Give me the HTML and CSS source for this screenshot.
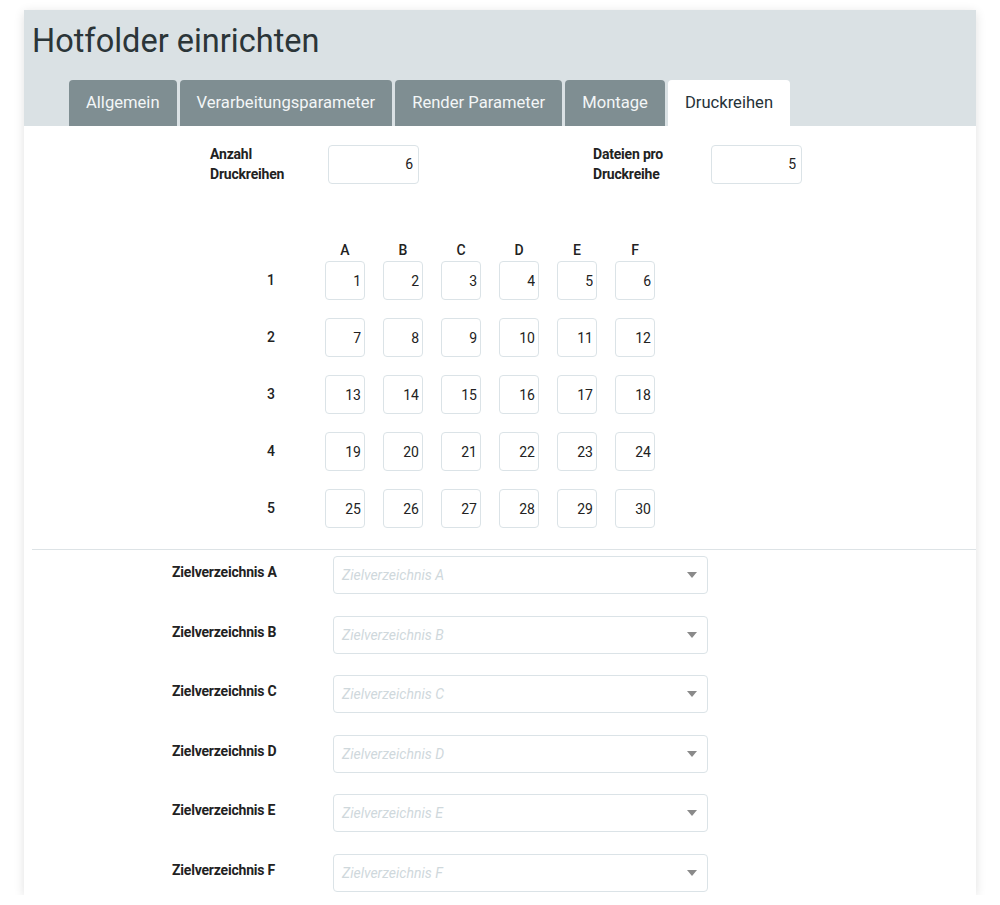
FILE: index.html
```html
<!DOCTYPE html>
<html lang="de">
<head>
    <meta charset="UTF-8">
    <title>Hotfolder einrichten</title>
    <link rel="stylesheet" href="styles.css">
</head>
<body>
    <div class="card">
        <div class="card-header">
            <h1>Hotfolder einrichten</h1>
            <ul class="tabs">
                <li class="tab">Allgemein</li>
                <li class="tab">Verarbeitungsparameter</li>
                <li class="tab">Render Parameter</li>
                <li class="tab">Montage</li>
                <li class="tab active">Druckreihen</li>
            </ul>
        </div>

        <div class="settings-row">
            <label class="field-label" for="rows">Anzahl<br>Druckreihen</label>
            <input class="num-input" id="rows" type="text" value="6">
            <label class="field-label second" for="files">Dateien pro<br>Druckreihe</label>
            <input class="num-input" id="files" type="text" value="5">
        </div>

        <div class="matrix">
            <span></span>
            <span class="col-head">A</span>
            <span class="col-head">B</span>
            <span class="col-head">C</span>
            <span class="col-head">D</span>
            <span class="col-head">E</span>
            <span class="col-head">F</span>

            <span class="row-head">1</span>
            <input class="cell" value="1"><input class="cell" value="2"><input class="cell" value="3">
            <input class="cell" value="4"><input class="cell" value="5"><input class="cell" value="6">

            <span class="row-head">2</span>
            <input class="cell" value="7"><input class="cell" value="8"><input class="cell" value="9">
            <input class="cell" value="10"><input class="cell" value="11"><input class="cell" value="12">

            <span class="row-head">3</span>
            <input class="cell" value="13"><input class="cell" value="14"><input class="cell" value="15">
            <input class="cell" value="16"><input class="cell" value="17"><input class="cell" value="18">

            <span class="row-head">4</span>
            <input class="cell" value="19"><input class="cell" value="20"><input class="cell" value="21">
            <input class="cell" value="22"><input class="cell" value="23"><input class="cell" value="24">

            <span class="row-head">5</span>
            <input class="cell" value="25"><input class="cell" value="26"><input class="cell" value="27">
            <input class="cell" value="28"><input class="cell" value="29"><input class="cell" value="30">
        </div>

        <hr class="divider">

        <div class="targets">
            <div class="target-row">
                <span class="target-label">Zielverzeichnis A</span>
                <div class="select"><span class="placeholder">Zielverzeichnis A</span><span class="caret"></span></div>
            </div>
            <div class="target-row">
                <span class="target-label">Zielverzeichnis B</span>
                <div class="select"><span class="placeholder">Zielverzeichnis B</span><span class="caret"></span></div>
            </div>
            <div class="target-row">
                <span class="target-label">Zielverzeichnis C</span>
                <div class="select"><span class="placeholder">Zielverzeichnis C</span><span class="caret"></span></div>
            </div>
            <div class="target-row">
                <span class="target-label">Zielverzeichnis D</span>
                <div class="select"><span class="placeholder">Zielverzeichnis D</span><span class="caret"></span></div>
            </div>
            <div class="target-row">
                <span class="target-label">Zielverzeichnis E</span>
                <div class="select"><span class="placeholder">Zielverzeichnis E</span><span class="caret"></span></div>
            </div>
            <div class="target-row">
                <span class="target-label">Zielverzeichnis F</span>
                <div class="select"><span class="placeholder">Zielverzeichnis F</span><span class="caret"></span></div>
            </div>
        </div>
    </div>
</body>
</html>
```

FILE: styles.css
```css
:root {
    --header-bg: #dae1e4;
    --tab-bg: #7f8e92;
    --tab-text: #f3f6f7;
    --text-primary: #263238;
    --input-border: #dbe3e7;
    --placeholder: #cfd8dc;
}

body {
    margin: 0;
    background: #ffffff;
    font-family: Roboto, "Liberation Sans", sans-serif;
    color: var(--text-primary);
}

.card {
    margin: 10px 24px 0;
    height: 885px;
    background: #ffffff;
    box-shadow: 0 2px 10px rgba(0, 0, 0, 0.12);
    overflow: hidden;
}

.card-header {
    background: var(--header-bg);
    padding: 0 0 0 45px;
}

h1 {
    margin: 0 0 0 -37px;
    padding-top: 14px;
    height: 56px;
    font-size: 32.5px;
    font-weight: 400;
    line-height: 34px;
    color: #2b3538;
}

.tabs {
    list-style: none;
    margin: 0;
    padding: 0;
    display: flex;
    gap: 3px;
}

.tab {
    height: 46px;
    line-height: 45px;
    padding: 0 17px;
    background: var(--tab-bg);
    color: var(--tab-text);
    font-size: 16.6px;
    border-radius: 4px 4px 0 0;
}

.tab.active {
    background: #ffffff;
    color: var(--text-primary);
}

.settings-row {
    display: flex;
    align-items: center;
    padding: 18px 0 0 186px;
    height: 40px;
}

.field-label {
    width: 118px;
    font-size: 14px;
    font-weight: 700;
    letter-spacing: -0.2px;
    line-height: 20px;
    color: #222;
}

.field-label.second {
    margin-left: 174px;
}

.num-input {
    width: 91px;
    height: 39px;
    box-sizing: border-box;
    border: 1px solid var(--input-border);
    border-radius: 4px;
    padding: 0 5px 0 0;
    text-align: right;
    font-family: inherit;
    font-size: 14px;
    color: #222;
}

.matrix {
    display: grid;
    grid-template-columns: 72px repeat(6, 40px);
    grid-template-rows: 22px repeat(5, 57px);
    column-gap: 18px;
    margin: 55px 0 0 211px;
    width: max-content;
}

.col-head {
    text-align: center;
    font-size: 14px;
    font-weight: 500;
    line-height: 22px;
    color: #222;
}

.row-head {
    text-align: center;
    font-size: 14px;
    font-weight: 500;
    line-height: 39px;
    height: 39px;
    color: #222;
}

.cell {
    width: 40px;
    height: 39px;
    box-sizing: border-box;
    border: 1px solid var(--input-border);
    border-radius: 4px;
    padding: 0 3px 0 0;
    text-align: right;
    font-family: inherit;
    font-size: 14px;
    color: #222;
}

.divider {
    border: 0;
    border-top: 1px solid #dde3e6;
    margin: 3px 0 0 8px;
}

.targets {
    padding: 6px 0 0 148px;
}

.target-row {
    display: flex;
    align-items: center;
    height: 38px;
    margin-bottom: 21.5px;
}

.target-label {
    width: 161px;
    margin-top: -6px;
    font-size: 14px;
    font-weight: 700;
    letter-spacing: -0.2px;
    color: #222;
}

.select {
    width: 375px;
    height: 38px;
    box-sizing: border-box;
    border: 1px solid var(--input-border);
    border-radius: 4px;
    display: flex;
    align-items: center;
    justify-content: space-between;
    padding: 0 10px 0 8px;
}

.placeholder {
    font-size: 14px;
    font-style: italic;
    color: var(--placeholder);
}

.caret {
    width: 0;
    height: 0;
    border-left: 5px solid transparent;
    border-right: 5px solid transparent;
    border-top: 6px solid #8a8a8a;
}
```
